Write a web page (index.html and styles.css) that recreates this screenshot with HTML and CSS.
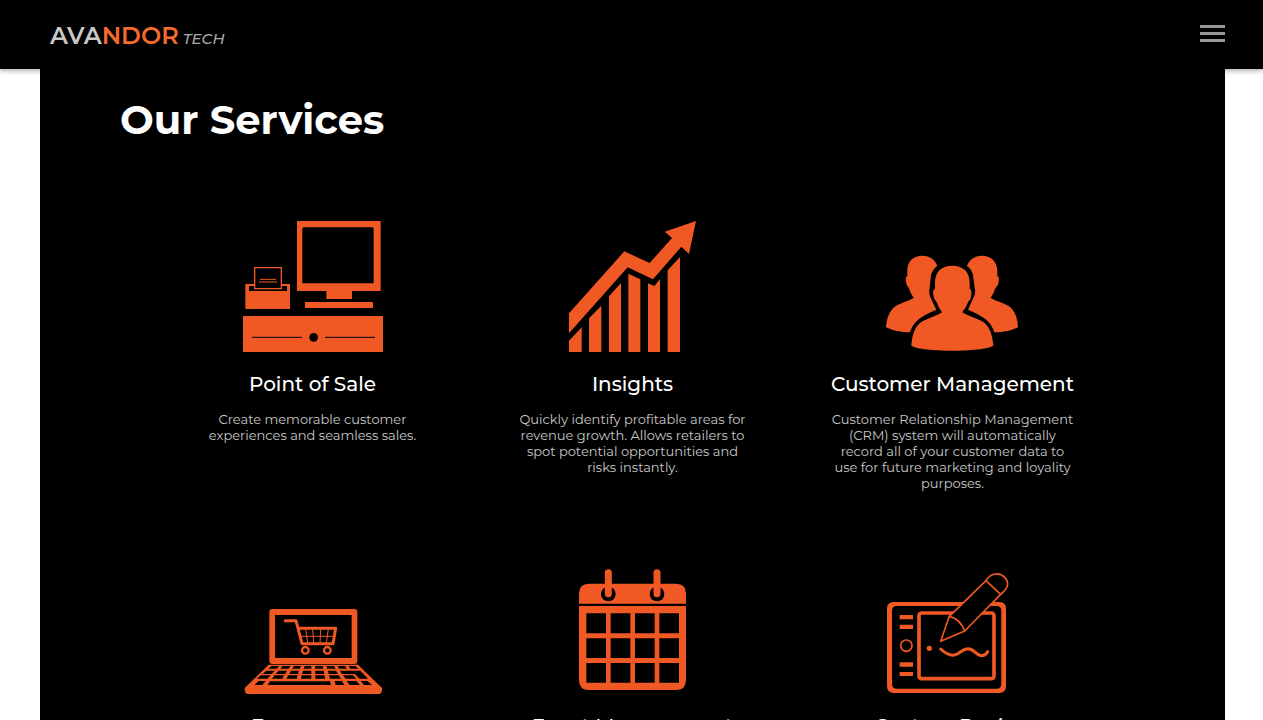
FILE: index.html
```html
<!DOCTYPE html>
<html lang="en">
<head>
<meta charset="utf-8">
<meta name="viewport" content="width=device-width, initial-scale=1">
<title>Avandor Tech - Our Services</title>
<link rel="stylesheet" href="styles.css">
</head>
<body>
<header class="site-header">
  <a class="logo" href="#"><span class="logo-name">AVA<span class="logo-accent">NDOR</span></span><span class="logo-tech">TECH</span></a>
  <button class="menu-button" type="button" aria-label="Open menu"><span class="bar"></span><span class="bar"></span><span class="bar"></span></button>
</header>
<main class="services">
  <h1 class="services-title">Our Services</h1>
  <div class="service-grid">
    <section class="service">
      <div class="service-icon">
        <svg width="140" height="131" viewBox="39 33 420 393" aria-hidden="true">
          <path class="fill" fill-rule="evenodd" d="M201 33H452V243H366V267H289V243H201ZM222 52Q217 52 217 57V220H431V57Q431 52 426 52Z"/>
          <path class="fill" d="M225 276H429V294H225ZM39 318H459V426H39Z"/>
          <path class="fill" d="M46 222H72V228H57V243H171V228H156V222H180V297H46Z"/>
          <path class="line" stroke-width="4" d="M74 173H154V236H74Z"/>
          <path class="line" stroke-width="3" d="M90 208H138M87 216H141"/>
          <path class="cut" stroke-width="3" d="M66 382H216M285 382H435"/>
          <circle cx="251" cy="382" r="13"/>
        </svg>
      </div>
      <h2 class="service-name">Point of Sale</h2>
      <p class="service-text">Create memorable customer<br>experiences and seamless sales.</p>
    </section>
    <section class="service">
      <div class="service-icon">
        <svg width="127" height="131" viewBox="27 33 381 393" aria-hidden="true">
          <path class="fill" d="M27 310L193 124L269 159L336 84L314 65L408 33L387 132L364 110L279 208L203 172L27 370Z"/>
          <path class="fill" d="M27 392L65 352V426H27ZM87 325L124 287V426H87ZM147 259L183 219V426H147ZM205 191L241 208V426H205ZM264 220L283 228L300 207V426H264ZM323 181L360 141V426H323Z"/>
        </svg>
      </div>
      <h2 class="service-name">Insights</h2>
      <p class="service-text">Quickly identify profitable areas for<br>revenue growth. Allows retailers to<br>spot potential opportunities and<br>risks instantly.</p>
    </section>
    <section class="service">
      <div class="service-icon">
        <svg width="134" height="100" viewBox="48 36 402 300" aria-hidden="true">
          <path class="fill" d="M202 78C195 58 180 48 158 47C127 47 112 66 112 92V109C107 109 107 118 108 125C109 136 114 139 117 145Q121 160 131 174C112 185 90 189 76 199C58 213 50 235 48 262C65 271 94 277 120 277C129 246 150 230 199 209L181 171C177 161 177 153 179 143L183 105Q189 86 202 78Z"/>
          <path class="fill" d="M291 78C298 58 313 48 335 47C366 47 381 66 382 92V109C387 109 387 118 386 125C385 136 380 139 376 145Q372 160 362 174C381 185 403 189 417 199C435 213 443 235 444 262C427 271 401 277 373 277C364 246 343 230 294 209L311 171C316 161 317 153 314 143L309 105Q304 86 291 78Z"/>
          <path class="fill" d="M247 77C212 77 194 98 195 130V147C188 147 188 163 192 173C194 180 198 181 200 187Q205 203 216 217C198 230 168 235 150 249C132 264 126 289 124 317C156 337 337 337 370 317C368 289 361 264 344 249C326 235 296 230 277 217Q289 203 294 187C298 181 302 180 303 169C306 156 303 147 299 147V130C300 98 282 77 247 77Z"/>
        </svg>
      </div>
      <h2 class="service-name">Customer Management</h2>
      <p class="service-text">Customer Relationship Management<br>(CRM) system will automatically<br>record all of your customer data to<br>use for future marketing and loyality<br>purposes.</p>
    </section>
    <section class="service">
      <div class="service-icon">
        <svg width="138" height="86" viewBox="42 39 414 258" aria-hidden="true">
          <path class="fill" fill-rule="evenodd" d="M127 42H373Q382 42 382 51V198Q382 207 373 207H127Q118 207 118 198V51Q118 42 127 42ZM135 60V189H365V60Z"/>
          <path class="fill" d="M116 209H384L456 279Q457 297 446 297H54Q43 297 44 279Z"/>
          <path d="M124 213H147L140 221H115ZM158 213H181L176 221H151ZM192 213H213L210 221H187ZM224 213H244V221H221ZM256 213H278L280 221H255ZM290 213H312L317 221H291ZM323 213H345L351 221H327ZM356 213H376L385 221H361Z"/>
          <path d="M109 227H134L125 237H98ZM146 227H171L165 237H137ZM183 227H207L204 237H178ZM219 227H244V237H216ZM256 227H281L283 237H256ZM294 227H318L324 237H296ZM330 227H391L414 251H388L375 237H336Z"/>
          <path d="M92 241H122L112 251H81ZM134 241H162L157 251H126ZM175 241H203L200 251H169ZM215 241H244V251H213ZM256 241H283L286 251H256ZM297 241H326L333 251H300ZM339 241H369L379 251H347Z"/>
          <path d="M86 258H107L97 270H74ZM120 259H300L303 270H113ZM314 258H336L343 270H317ZM350 258H379L390 270H359ZM392 258H412L426 270H402Z"/>
          <path class="line" stroke-width="9" stroke-linecap="round" stroke-linejoin="round" d="M166 77H198L216 146H309L317 100H206"/>
          <path class="line" stroke-width="3" d="M209 124H311M227 102L233 145M248 102L251 145M272 102L270 145M295 102L289 145"/>
          <circle class="line" cx="226" cy="166" r="10" stroke-width="7"/>
          <circle class="line" cx="292" cy="166" r="10" stroke-width="7"/>
        </svg>
      </div>
      <h2 class="service-name">Ecommerce</h2>
    </section>
    <section class="service">
      <div class="service-icon">
        <svg width="107" height="125" viewBox="57 27 321 375" aria-hidden="true">
          <path class="fill" d="M57 131V101Q57 71 87 71H348Q378 71 378 101V131ZM57 138H378V360Q378 390 348 390H87Q57 390 57 360Z"/>
          <circle cx="145" cy="102" r="22"/>
          <circle cx="291" cy="102" r="22"/>
          <path class="line" stroke-width="21" stroke-linecap="round" d="M145 38V101M291 38V101"/>
          <path d="M79 160H138V220H79ZM152 160H211V220H152ZM225 160H284V220H225ZM298 160H357V220H298ZM79 235H138V294H79ZM152 235H211V294H152ZM225 235H284V294H225ZM298 235H357V294H298ZM79 309H138V368H79ZM152 309H211V368H152ZM225 309H284V368H225ZM298 309H357V368H298Z"/>
        </svg>
      </div>
      <h2 class="service-name">Event Management</h2>
    </section>
    <section class="service">
      <div class="service-icon">
        <svg width="132" height="122" viewBox="51 36 396 366" aria-hidden="true">
          <path class="fill" fill-rule="evenodd" d="M72 126H388Q408 126 408 146V378Q408 399 388 399H72Q51 399 51 378V146Q51 126 72 126ZM81 138Q66 138 66 153V371Q66 386 81 386H379Q394 386 394 371V153Q394 138 379 138Z"/>
          <rect class="line" x="147" y="159" width="225" height="197" rx="8" stroke-width="11"/>
          <path class="fill" d="M89 165H129V178H89ZM89 194H129V207H89ZM89 307H129V320H89ZM89 336H129V348H89Z"/>
          <circle class="line" cx="109" cy="257" r="17" stroke-width="5"/>
          <circle class="fill" cx="178" cy="265" r="8"/>
          <path class="line" stroke-width="9" stroke-linecap="round" d="M212 267C227 281 241 287 253 285C271 282 276 266 294 266C315 267 317 287 336 287Q348 286 353 275"/>
          <path d="M212 244L238 169L348 62C362 39 388 35 404 52C420 69 413 85 392 103L284 213Z"/>
          <path class="line" stroke-width="5" stroke-linejoin="round" d="M212 244L238 169L348 62C362 39 388 35 404 52C420 69 413 85 392 103L284 213ZM348 62L392 103M238 169Q271 177 284 213"/>
        </svg>
      </div>
      <h2 class="service-name">Custom Design</h2>
    </section>
  </div>
</main>
</body>
</html>
```
FILE: styles.css
```css
* { box-sizing: border-box; }

body {
  margin: 0;
  background: #fff;
  color: #fff;
  font-family: Montserrat, Inter, "Open Sans", sans-serif;
}

.site-header {
  position: sticky;
  top: 0;
  z-index: 2;
  display: flex;
  align-items: center;
  justify-content: space-between;
  height: 69px;
  padding: 0 38px 2px 50px;
  background: #000;
  box-shadow: 0 2px 5px rgba(0, 0, 0, 0.3);
}

.logo {
  display: flex;
  align-items: baseline;
  gap: 4px;
  padding-top: 4px;
  color: #c8c8c8;
  text-decoration: none;
}

.logo-name {
  font-size: 24px;
  font-weight: 600;
  line-height: 32px;
}

.logo-accent { color: #f26a2e; }

.logo-tech {
  color: #aaa;
  font-size: 15px;
  font-style: italic;
  font-weight: 500;
}

.menu-button {
  display: flex;
  flex-direction: column;
  gap: 4px;
  width: 25px;
  padding: 0;
  border: 0;
  background: none;
  cursor: pointer;
}

.bar {
  width: 100%;
  height: 3px;
  background: #999;
}

.services {
  position: relative;
  z-index: 3;
  margin: 0 38px 0 40px;
  padding: 26px 80px 60px;
  background: #000;
}

.services-title {
  margin: 0 0 67px;
  font-size: 40px;
  font-weight: 700;
  line-height: 50px;
}

.service-grid {
  display: grid;
  grid-template-columns: repeat(3, 320px);
  justify-content: center;
  row-gap: 63px;
}

.service {
  display: flex;
  flex-direction: column;
  align-items: center;
  text-align: center;
}

.service-icon {
  display: flex;
  align-items: flex-end;
  height: 140px;
}

.service-icon svg { flex: none; }

.service-name {
  margin: 20px 0 15px;
  font-size: 20px;
  font-weight: 500;
  line-height: 24px;
}

.service-text {
  margin: 0;
  color: #c8c8c8;
  font-size: 13px;
  line-height: 16px;
}

.fill { fill: #f05824; }
.line { fill: none; stroke: #f05824; }
.cut { fill: none; stroke: #000; }
```
